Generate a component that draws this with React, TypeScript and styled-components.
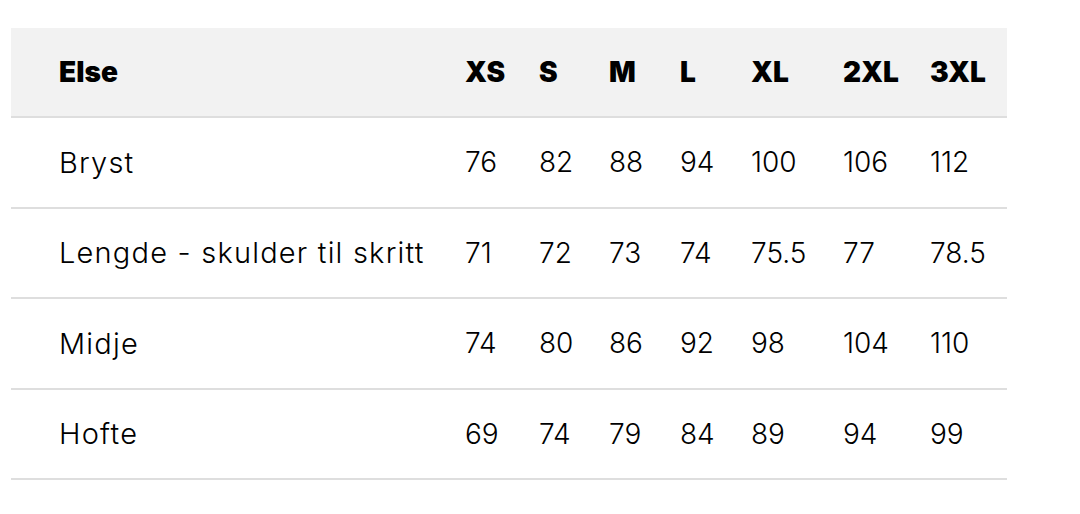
import styled, { createGlobalStyle } from 'styled-components';

const GlobalStyle = createGlobalStyle`
  html, body {
    margin: 0;
    padding: 0;
    background: #ffffff;
  }
  body {
    font-family: Inter, 'Open Sans', sans-serif;
    color: #000000;
  }
`;

const sizes = ['XS', 'S', 'M', 'L', 'XL', '2XL', '3XL'];
const columnWidths = [454, 74, 70, 71, 71, 92, 87, 77];

const rows = [
  { label: 'Bryst', values: ['76', '82', '88', '94', '100', '106', '112'] },
  { label: 'Lengde - skulder til skritt', values: ['71', '72', '73', '74', '75.5', '77', '78.5'] },
  { label: 'Midje', values: ['74', '80', '86', '92', '98', '104', '110'] },
  { label: 'Hofte', values: ['69', '74', '79', '84', '89', '94', '99'] },
];

export default function App() {
  return (
    <>
      <GlobalStyle />
      <Page>
        <SizeTable>
          <colgroup>
            {columnWidths.map((w, i) => (
              <col key={i} style={{ width: w }} />
            ))}
          </colgroup>
          <thead>
            <HeadRow>
              <HeadCell $first>Else</HeadCell>
              {sizes.map((s) => (
                <HeadCell key={s}>{s}</HeadCell>
              ))}
            </HeadRow>
          </thead>
          <tbody>
            {rows.map((row) => (
              <BodyRow key={row.label}>
                <LabelCell>{row.label}</LabelCell>
                {row.values.map((v, i) => (
                  <Cell key={i}>{v}</Cell>
                ))}
              </BodyRow>
            ))}
          </tbody>
        </SizeTable>
      </Page>
    </>
  );
}

const Page = styled.div`
  padding: 28px 0 0 11px;
`;

const SizeTable = styled.table`
  width: 996px;
  table-layout: fixed;
  border-collapse: collapse;
`;

const HeadRow = styled.tr`
  background: #f2f2f2;
  border-bottom: 2px solid #dedede;
`;

const BodyRow = styled.tr`
  border-bottom: 2px solid #dedede;
`;

const HeadCell = styled.th<{ $first?: boolean }>`
  height: 88px;
  padding: 0 0 0 ${(p) => (p.$first ? '48px' : '0')};
  text-align: left;
  font-size: 28px;
  font-weight: 900;
  white-space: nowrap;
`;

const Cell = styled.td`
  height: 88.5px;
  padding: 0;
  text-align: left;
  font-size: 28px;
  font-weight: 300;
  white-space: nowrap;
`;

const LabelCell = styled(Cell)`
  padding-left: 48px;
  font-size: 29px;
  letter-spacing: 1.2px;
`;
